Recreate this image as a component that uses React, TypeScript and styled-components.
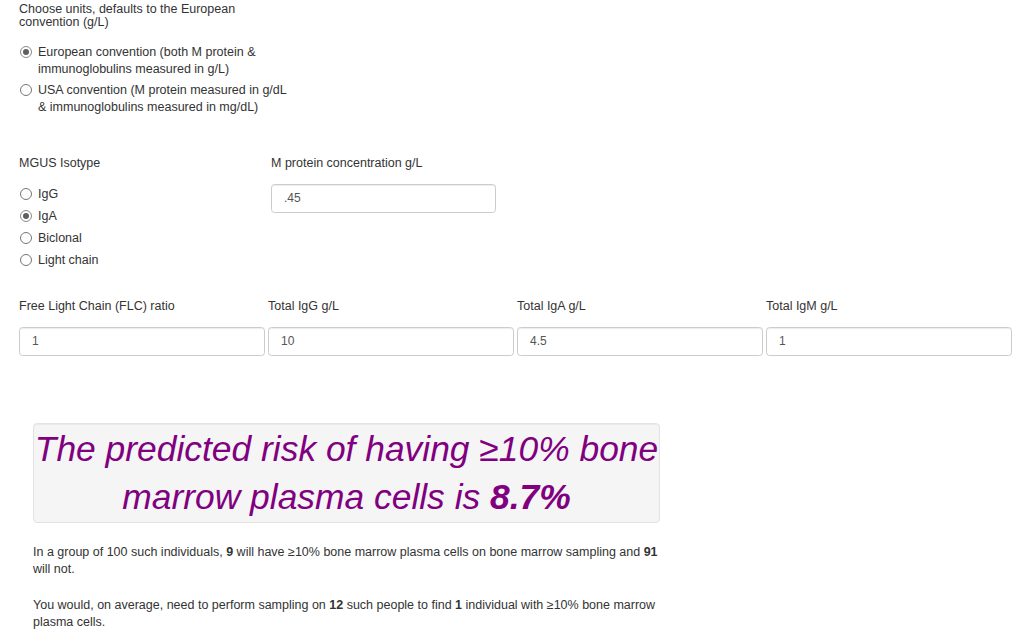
import React from "react";
import styled, { createGlobalStyle } from "styled-components";

const Global = createGlobalStyle`
  html, body { margin: 0; padding: 0; background: #fff; }
  body {
    font-family: "Liberation Sans", Arial, Helvetica, sans-serif;
    font-size: 12.5px;
    line-height: 17px;
    color: #333;
  }
  * { box-sizing: border-box; }
`;

const Page = styled.div`
  padding: 3px 13px 0 19px;
  width: 1024px;
`;

const Section = styled.div``;

const ControlLabel = styled.div<{ $lh?: number }>`
  font-size: 12.5px;
  line-height: ${(p) => p.$lh ?? 17}px;
  color: #333;
  width: ${(p) => (p.$lh ? "250px" : "auto")};
`;

const RadioGroup = styled.div<{ $mt: number; $gap: number }>`
  margin-top: ${(p) => p.$mt}px;
  display: flex;
  flex-direction: column;
  gap: ${(p) => p.$gap}px;
`;

const RadioRow = styled.label`
  display: flex;
  align-items: flex-start;
  gap: 6px;
  padding-left: 1px;
  line-height: 17px;
  font-size: 12.5px;
  color: #333;
  max-width: 272px;
`;

const Circle = styled.span<{ $checked?: boolean }>`
  flex: none;
  width: 12px;
  height: 12px;
  margin-top: 2.5px;
  border-radius: 50%;
  border: 1px solid ${(p) => (p.$checked ? "#8a8a8a" : "#767676")};
  background: #fff;
  display: flex;
  align-items: center;
  justify-content: center;
  &::after {
    content: "";
    display: ${(p) => (p.$checked ? "block" : "none")};
    width: 6px;
    height: 6px;
    border-radius: 50%;
    background: #5f5f5f;
  }
`;

const TwoCol = styled.div`
  display: grid;
  grid-template-columns: 252px 225px;
  margin-top: 39px;
`;

const FourCol = styled.div`
  display: grid;
  grid-template-columns: repeat(4, 246px);
  column-gap: 3px;
  margin-top: 29px;
`;

const Field = styled.div`
  display: flex;
  flex-direction: column;
  gap: 12.5px;
`;

const Input = styled.div`
  height: 29px;
  border: 1px solid #ccc;
  border-radius: 3.5px;
  box-shadow: inset 0 1px 1px rgba(0, 0, 0, 0.075);
  padding: 0 12px;
  display: flex;
  align-items: center;
  font-size: 12px;
  color: #555;
  background: #fff;
`;

const Result = styled.div`
  margin: 67px 0 0 14px;
  width: 627px;
  height: 100px;
  background: #f5f5f5;
  border: 1px solid #e3e3e3;
  border-radius: 4px;
  box-shadow: inset 0 1px 1px rgba(0, 0, 0, 0.05);
  padding-top: 1px;
  text-align: center;
  color: #800080;
  font-style: italic;
  font-size: 35.4px;
  line-height: 48px;
  white-space: nowrap;
`;

const Para = styled.p<{ $mt: number }>`
  margin: ${(p) => p.$mt}px 0 0 14px;
  width: 632px;
  font-size: 12.5px;
  line-height: 17px;
  color: #333;
`;

const Radio = ({ checked, children }: { checked?: boolean; children: React.ReactNode }) => (
  <RadioRow>
    <Circle $checked={checked} />
    <span>{children}</span>
  </RadioRow>
);

export default function App() {
  return (
    <>
      <Global />
      <Page>
        <Section>
          <ControlLabel $lh={13}>Choose units, defaults to the European convention (g/L)</ControlLabel>
          <RadioGroup $mt={14.5} $gap={4}>
            <Radio checked>European convention (both M protein &amp; immunoglobulins measured in g/L)</Radio>
            <Radio>USA convention (M protein measured in g/dL &amp; immunoglobulins measured in mg/dL)</Radio>
          </RadioGroup>
        </Section>
        <TwoCol>
          <div>
            <ControlLabel>MGUS Isotype</ControlLabel>
            <RadioGroup $mt={14} $gap={5}>
              <Radio>IgG</Radio>
              <Radio checked>IgA</Radio>
              <Radio>Biclonal</Radio>
              <Radio>Light chain</Radio>
            </RadioGroup>
          </div>
          <Field>
            <ControlLabel>M protein concentration g/L</ControlLabel>
            <Input>.45</Input>
          </Field>
        </TwoCol>
        <FourCol>
          <Field>
            <ControlLabel>Free Light Chain (FLC) ratio</ControlLabel>
            <Input>1</Input>
          </Field>
          <Field>
            <ControlLabel>Total IgG g/L</ControlLabel>
            <Input>10</Input>
          </Field>
          <Field>
            <ControlLabel>Total IgA g/L</ControlLabel>
            <Input>4.5</Input>
          </Field>
          <Field>
            <ControlLabel>Total IgM g/L</ControlLabel>
            <Input>1</Input>
          </Field>
        </FourCol>
        <Result>
          The predicted risk of having ≥10% bone
          <br />
          marrow plasma cells is <b>8.7%</b>
        </Result>
        <Para $mt={20.5}>
          In a group of 100 such individuals, <b>9</b> will have ≥10% bone marrow plasma cells on bone marrow sampling and <b>91</b> will not.
        </Para>
        <Para $mt={19.5}>
          You would, on average, need to perform sampling on <b>12</b> such people to find <b>1</b> individual with ≥10% bone marrow plasma cells.
        </Para>
      </Page>
    </>
  );
}
